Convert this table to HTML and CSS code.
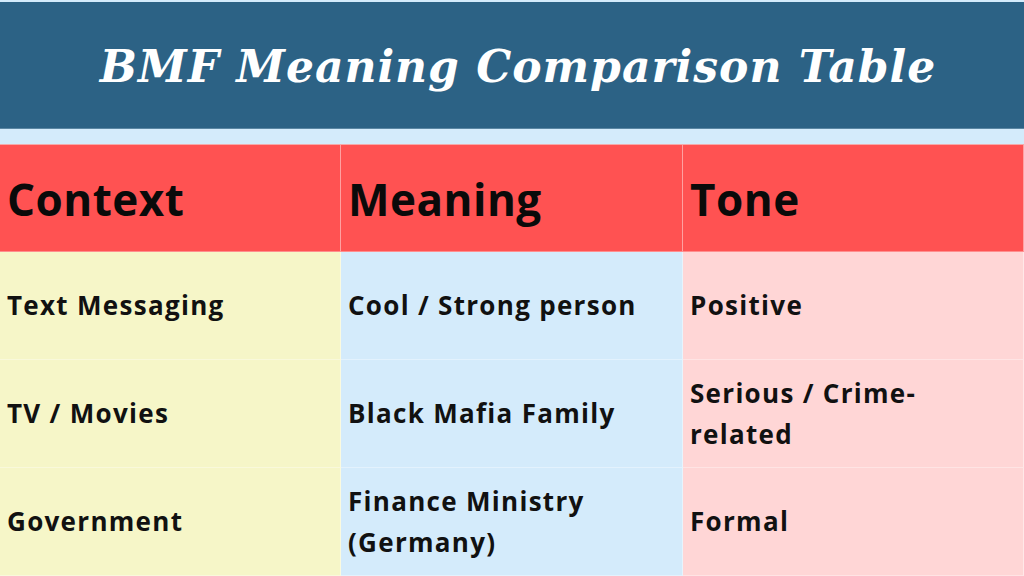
FILE: index.html
```html
<!DOCTYPE html>
<html>
<head>
<meta charset="utf-8">
<link rel="stylesheet" href="styles.css">
</head>
<body>
<div class="page">
  <header class="title-bar"><h1 class="title">BMF Meaning Comparison Table</h1></header>
  <div class="strip"></div>
  <div class="table">
    <div class="cell head">Context</div>
    <div class="cell head">Meaning</div>
    <div class="cell head">Tone</div>

    <div class="cell c1">Text Messaging</div>
    <div class="cell c2">Cool / Strong person</div>
    <div class="cell c3">Positive</div>

    <div class="cell c1">TV / Movies</div>
    <div class="cell c2">Black Mafia Family</div>
    <div class="cell c3">Serious / Crime-<br>related</div>

    <div class="cell c1">Government</div>
    <div class="cell c2">Finance Ministry<br>(Germany)</div>
    <div class="cell c3">Formal</div>
  </div>
</div>
</body>
</html>
```
FILE: styles.css
```css
html, body { margin: 0; padding: 0; }
body { width: 1024px; height: 576px; overflow: hidden; background: #d4ebfb; }
.page { display: flex; flex-direction: column; height: 576px; padding-top: 2px; box-sizing: border-box; }
.title-bar {
  background: #2c6285;
  height: 127px;
  display: flex; align-items: center; justify-content: center;
  border-bottom: 1px solid #5a86a3;
}
.title {
  margin: 0 0 0 12px;
  color: #fff;
  font-family: "DejaVu Serif", serif;
  font-weight: 700;
  font-style: italic;
  font-size: 44px;
  letter-spacing: 1px;
  padding-top: 2px;
}
.strip { height: 15px; background: #d4ebfb; border-bottom: 1px solid #f4aaaa; }
.table {
  flex: 1;
  display: grid;
  grid-template-columns: 341px 342px 341px;
  grid-template-rows: 107px 108px 108px 108px;
}
.cell {
  display: flex; align-items: center;
  padding-left: 7px;
  font-family: "Open Sans", sans-serif;
  font-weight: 700;
  font-size: 26px;
  letter-spacing: 1.3px;
  line-height: 41px;
  color: #111;
  box-sizing: border-box;
  border-right: 1px solid rgba(255,255,255,0.45);
  border-bottom: 1px solid rgba(255,255,255,0.35);
}
.head { background: #ff5252; font-size: 44px; letter-spacing: 0.5px; color: #0a0a0a; padding-top: 2px; }
.c1 { background: #f6f6c8; }
.c2 { background: #d4ebfb; }
.c3 { background: #ffd6d6; }
```
